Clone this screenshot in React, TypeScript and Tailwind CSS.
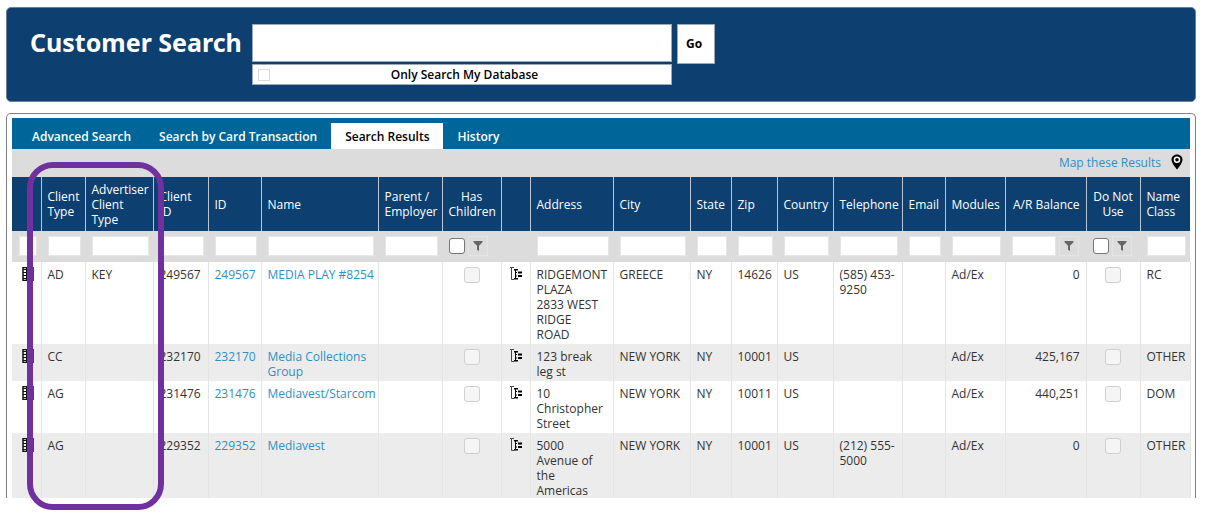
import React from "react";

type Filter = "none" | "text" | "number" | "check";

interface Column {
  label: string;
  width: string;
  filter: Filter;
  align?: string;
}

const columns: Column[] = [
  { label: "", width: "w-[29px]", filter: "text" },
  { label: "Client\nType", width: "w-[44px]", filter: "text" },
  { label: "Advertiser\nClient\nType", width: "w-[68px]", filter: "text" },
  { label: "Client\nID", width: "w-[55px]", filter: "text" },
  { label: "ID", width: "w-[53px]", filter: "text" },
  { label: "Name", width: "w-[117px]", filter: "text" },
  { label: "Parent /\nEmployer", width: "w-[64px]", filter: "text" },
  { label: "Has\nChildren", width: "w-[59px]", filter: "check", align: "text-center" },
  { label: "", width: "w-[29px]", filter: "none" },
  { label: "Address", width: "w-[83px]", filter: "text" },
  { label: "City", width: "w-[77px]", filter: "text" },
  { label: "State", width: "w-[41px]", filter: "text" },
  { label: "Zip", width: "w-[46px]", filter: "text" },
  { label: "Country", width: "w-[56px]", filter: "text" },
  { label: "Telephone", width: "w-[69px]", filter: "text" },
  { label: "Email", width: "w-[43px]", filter: "text" },
  { label: "Modules", width: "w-[60px]", filter: "text" },
  { label: "A/R Balance", width: "w-[81px]", filter: "number", align: "text-right" },
  { label: "Do Not\nUse", width: "w-[54px]", filter: "check", align: "text-center" },
  { label: "Name\nClass", width: "w-[50px]", filter: "text" },
];

interface Customer {
  type: string;
  advertiserType: string;
  id: string;
  name: string;
  address: string;
  city: string;
  zip: string;
  phone: string;
  balance: string;
  nameClass: string;
}

const customers: Customer[] = [
  {
    type: "AD",
    advertiserType: "KEY",
    id: "249567",
    name: "MEDIA PLAY #8254",
    address: "RIDGEMONT\nPLAZA\n2833 WEST\nRIDGE\nROAD",
    city: "GREECE",
    zip: "14626",
    phone: "(585) 453-\n9250",
    balance: "0",
    nameClass: "RC",
  },
  {
    type: "CC",
    advertiserType: "",
    id: "232170",
    name: "Media Collections\nGroup",
    address: "123 break\nleg st",
    city: "NEW YORK",
    zip: "10001",
    phone: "",
    balance: "425,167",
    nameClass: "OTHER",
  },
  {
    type: "AG",
    advertiserType: "",
    id: "231476",
    name: "Mediavest/Starcom",
    address: "10\nChristopher\nStreet",
    city: "NEW YORK",
    zip: "10011",
    phone: "",
    balance: "440,251",
    nameClass: "DOM",
  },
  {
    type: "AG",
    advertiserType: "",
    id: "229352",
    name: "Mediavest",
    address: "5000\nAvenue of\nthe\nAmericas",
    city: "NEW YORK",
    zip: "10001",
    phone: "(212) 555-\n5000",
    balance: "0",
    nameClass: "OTHER",
  },
];

const tabs = ["Advanced Search", "Search by Card Transaction", "Search Results", "History"];

function FunnelButton({ label }: { label: string }) {
  return (
    <button
      type="button"
      aria-label={"Filter " + label}
      className="flex h-5 w-5 shrink-0 items-center justify-center border border-[#e4e4e4] bg-[#dcdcdc]"
    >
      <svg width="10" height="10" viewBox="0 0 10 10" fill="#666">
        <path d="M0.500 0h9v1.200L6 4.800V10L4 8.800V4.800L.500 1.200z" />
      </svg>
    </button>
  );
}

function GridIcon() {
  return (
    <svg width="12" height="14" viewBox="0 0 12 14" fill="none" stroke="#111">
      <rect x="1" y="0.500" width="10" height="13" strokeWidth="1.500" />
      <path d="M1 2.500h10M1 5.500h10M1 8.500h10M1 11.500h10M4.500 0v14M7.500 0v14" />
    </svg>
  );
}

function TreeIcon() {
  return (
    <svg width="12" height="13" viewBox="0 0 12 13">
      <path d="M4 .5H1.500v12H4M0 .5h1.500" fill="none" stroke="#444" />
      <path
        d="M4 2h4v1.500H6V5h1v1H6v2.500h1v1H6V11h2v1.500H4V11h1V3.500H4zM8 4.500h4v2H8zM8 8h4v2H8z"
        fill="#000"
      />
    </svg>
  );
}

function FilterCell({ column }: { column: Column }) {
  const name = column.label.replace(/\n/g, " ") || "row";
  if (column.filter === "none") return null;
  if (column.filter === "check") {
    return (
      <div className="flex items-center gap-[3px]">
        <input
          type="checkbox"
          aria-label={"Filter by " + name}
          className="h-4 w-4 shrink-0 appearance-none rounded-[3px] border border-[#767676] bg-white"
        />
        <FunnelButton label={name} />
      </div>
    );
  }
  return (
    <div className={column.filter === "number" ? "flex gap-[3px] pr-[3px]" : "flex"}>
      <input
        type="text"
        aria-label={"Filter by " + name}
        className="h-5 w-full min-w-0 border border-[#e6e6e6] bg-white px-1"
      />
      {column.filter === "number" && <FunnelButton label={name} />}
    </div>
  );
}

function Flag({ label }: { label: string }) {
  return (
    <input
      type="checkbox"
      disabled
      aria-label={label}
      className="mx-auto block h-4 w-4 appearance-none rounded-[3px] border border-[#cfcfcf] bg-[#f5f5f5]"
    />
  );
}

function CustomerRow({ customer, last }: { customer: Customer; last: boolean }) {
  const link = "text-[#2f8fc6]";
  const cells: React.ReactNode[] = [
    <div className="ml-1">
      <GridIcon />
    </div>,
    customer.type,
    customer.advertiserType,
    customer.id,
    <a href="#customer" className={link}>
      {customer.id}
    </a>,
    <a href="#customer" className={link}>
      {customer.name}
    </a>,
    "",
    <Flag label="Has children" />,
    <div className="ml-[2px]">
      <TreeIcon />
    </div>,
    customer.address,
    customer.city,
    "NY",
    customer.zip,
    "US",
    customer.phone,
    "",
    "Ad/Ex",
    customer.balance,
    <Flag label="Do not use" />,
    customer.nameClass,
  ];
  return (
    <tr className="bg-white align-top even:bg-[#ececec]">
      {cells.map((cell, i) => (
        <td
          key={i}
          className={`border-r border-[#e4e4e4] px-[6px] pt-[5px] whitespace-pre ${
            last ? "pb-0" : "pb-[2px]"
          } ${columns[i].align ?? ""}`}
        >
          {cell}
        </td>
      ))}
    </tr>
  );
}

export default function App() {
  return (
    <div className="bg-white pt-[7px] pr-[11px] pb-6 pl-[6px] font-['Open_Sans','Noto_Sans',sans-serif] text-[12px] leading-[15px] text-[#333]">
      <header className="flex items-start rounded-[5px] border border-[#6b7f90] bg-[#0d4071] pt-4 pr-6 pb-4 pl-[23px]">
        <h1 className="w-[222px] shrink-0 pt-[2px] font-['Noto_Sans',sans-serif] text-[25px] leading-8 font-bold whitespace-nowrap text-white">
          Customer Search
        </h1>
        <form className="flex items-start gap-[5px]">
          <div className="flex w-[420px] flex-col gap-[2px]">
            <input
              type="text"
              aria-label="Customer Search"
              className="h-[38px] w-full border border-[#9aa9b8] bg-white px-2"
            />
            <label className="flex h-[21px] items-center border border-[#9aa9b8] bg-white pr-[12px] pl-[5px] font-semibold text-black">
              <input
                type="checkbox"
                className="h-3 w-3 shrink-0 appearance-none border border-[#dcdcdc] bg-white"
              />
              <span className="grow text-center">Only Search My Database</span>
            </label>
          </div>
          <button
            type="button"
            className="h-10 w-[38px] border border-[#9aa9b8] bg-white pr-1 pb-[2px] font-bold text-black"
          >
            Go
          </button>
        </form>
      </header>

      <main className="relative mt-[11px] rounded-t-[5px] border border-b-0 border-[#808080] px-[5px] pt-1">
        <nav className="flex h-[31px] items-end bg-[#006699] pl-[6px]">
          {tabs.map((tab) => (
            <a
              key={tab}
              href="#tab"
              className={`flex h-[26px] items-center px-[14px] font-semibold whitespace-nowrap ${
                tab === "Search Results" ? "bg-white text-black" : "text-white"
              }`}
            >
              {tab}
            </a>
          ))}
        </nav>

        <div className="flex h-7 items-center justify-end gap-[10px] bg-[#dcdcdc] pr-[7px] pb-[2px]">
          <a href="#map" className="text-[#2f8fc6]">
            Map these Results
          </a>
          <svg width="12" height="16" viewBox="0 0 12 16">
            <path
              d="M6 .5C2.800.500.500 2.800.500 5.800.500 9.500 6 15.500 6 15.500s5.500-6 5.500-9.700C11.500 2.800 9.200.500 6 .500z"
              fill="#000"
            />
            <circle cx="6" cy="5.800" r="3.300" fill="#fff" />
            <circle cx="6" cy="5.800" r="1.800" fill="#000" />
          </svg>
        </div>

        <table className="w-full table-fixed border-collapse">
          <colgroup>
            {columns.map((column, i) => (
              <col key={i} className={column.width} />
            ))}
          </colgroup>
          <thead>
            <tr className="h-[54px] bg-[#0d4071] text-white">
              {columns.map((column, i) => (
                <th
                  key={i}
                  scope="col"
                  className={`border-r border-[#b9c6d2] px-[6px] font-normal whitespace-pre last:border-r-0 ${
                    column.align ?? "text-left"
                  }`}
                >
                  {column.label}
                </th>
              ))}
            </tr>
            <tr className="h-[31px] bg-[#dcdcdc]">
              {columns.map((column, i) => (
                <td key={i} className="pr-[4px] pb-[2px] pl-[7px]">
                  <FilterCell column={column} />
                </td>
              ))}
            </tr>
          </thead>
          <tbody>
            {customers.map((customer, i) => (
              <CustomerRow key={customer.id} customer={customer} last={i === customers.length - 1} />
            ))}
          </tbody>
        </table>

        <div className="pointer-events-none absolute top-[48px] -bottom-3 left-5 w-[137px] rounded-[26px] border-[6px] border-[#7030a0]" />
      </main>
    </div>
  );
}
